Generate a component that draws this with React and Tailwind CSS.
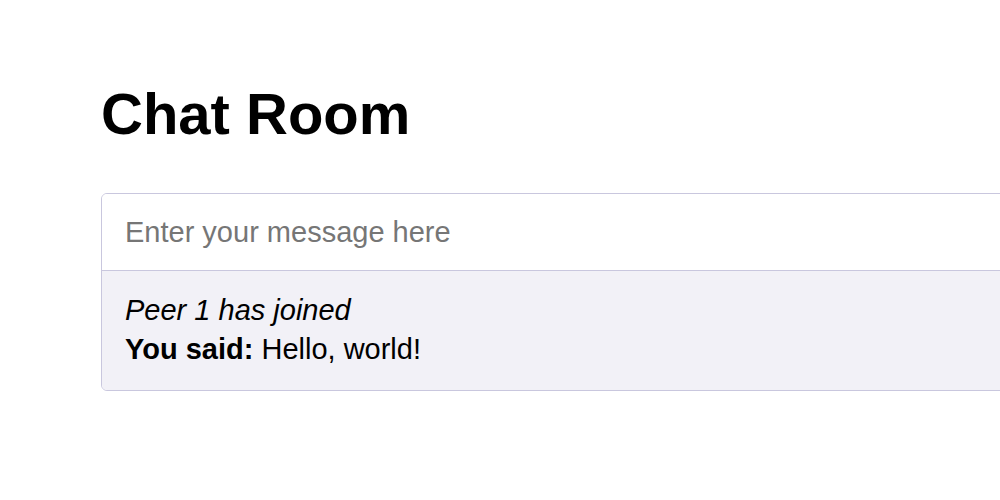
export default function App() {
  return (
    <div className="h-[500px] w-full overflow-hidden bg-white pl-[101px] font-['Liberation_Sans',Arial,sans-serif] text-black">
      <h1 className="pt-[85px] text-[58px] font-bold leading-[58px]">Chat Room</h1>

      <div className="mt-[50px] w-[1000px] overflow-hidden rounded-md border border-[#c9c7de]">
        <input
          type="text"
          placeholder="Enter your message here"
          className="block h-[76px] w-full bg-white px-[23px] text-[29px] outline-none placeholder:text-[#767676]"
        />
        <div className="border-t border-[#c9c7de] bg-[#f2f1f7] px-[23px] pt-[20px] pb-[21px] text-[29px] leading-[39px]">
          <div className="italic">Peer 1 has joined</div>
          <div>
            <span className="font-bold">You said:</span> Hello, world!
          </div>
        </div>
      </div>
    </div>
  );
}
